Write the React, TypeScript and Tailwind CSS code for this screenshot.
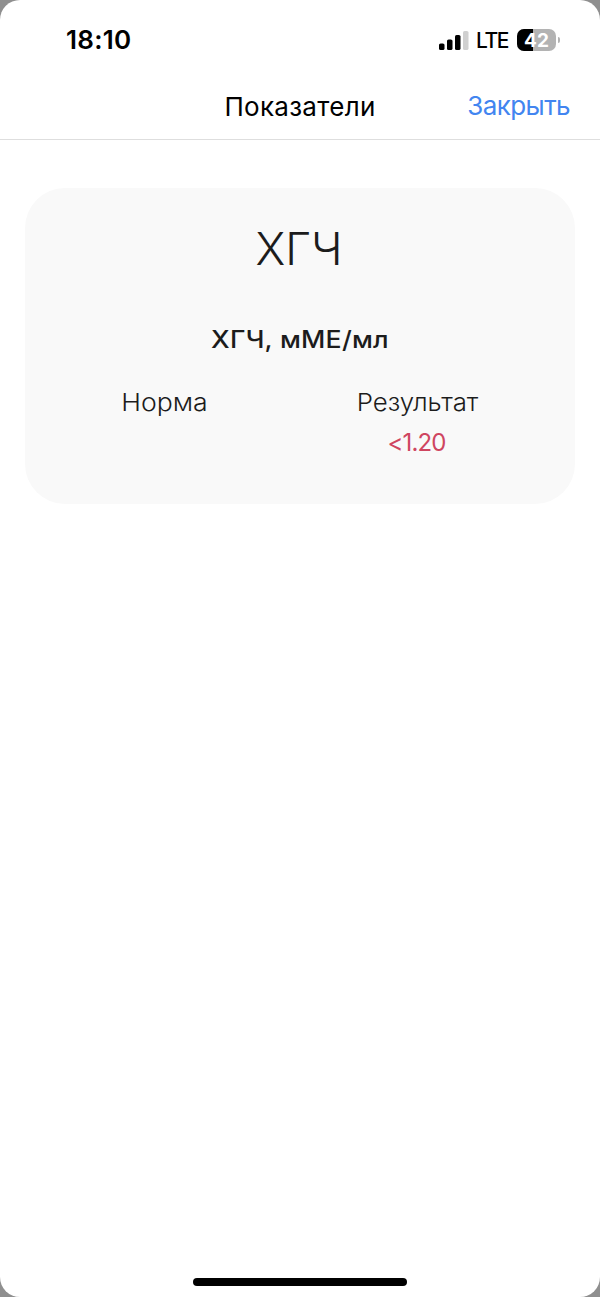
import React from 'react'

function Signal() {
  return (
    <svg width="30" height="19" viewBox="0 0 30 19" className="block">
      <rect x="0" y="12.5" width="5.5" height="6.5" rx="1.6" />
      <rect x="8" y="8.5" width="5.5" height="10.5" rx="1.6" />
      <rect x="16" y="4" width="5.5" height="15" rx="1.6" />
      <rect x="24" y="0" width="5.5" height="19" rx="1.6" fill="#d0d0d0" />
    </svg>
  )
}

function Battery({ level }: { level: number }) {
  return (
    <div className="flex items-center">
      <div className="relative flex h-[22px] w-[39px] items-center justify-center overflow-hidden rounded-[7px] bg-[#b3b3b3]">
        <div
          className="absolute inset-y-0 left-0 bg-black"
          style={{ width: `${level}%` }}
        />
        <span className="relative text-[19px] leading-none font-bold text-white">
          {level}
        </span>
      </div>
      <div className="ml-[2px] h-[6px] w-[2px] rounded-r-full bg-[#b3b3b3]" />
    </div>
  )
}

function StatusBar() {
  return (
    <div className="flex h-20 items-center justify-between pr-[40px] pl-[66px]">
      <span className="text-[26px] leading-8 font-semibold tracking-[0.3px]">
        18:10
      </span>
      <div className="flex items-center">
        <Signal />
        <span className="mr-[9px] ml-[7px] pt-[2px] text-[21px] leading-6 font-medium tracking-[-1.4px]">
          LTE
        </span>
        <Battery level={42} />
      </div>
    </div>
  )
}

function Nav() {
  return (
    <nav className="grid h-[60px] grid-cols-[1fr_auto_1fr] items-start border-b border-[#dedede] px-[30px] pt-[10px] text-[26px] leading-8">
      <span />
      <h1 className="pt-[1px] tracking-[0.3px]">Показатели</h1>
      <button className="justify-self-end leading-8 tracking-[-0.6px] text-[#4285f0]">
        Закрыть
      </button>
    </nav>
  )
}

function Card() {
  return (
    <section className="mx-[25px] mt-12 h-[316px] rounded-[40px] bg-[#f9f9f9] pt-[33px] text-center text-[#1c1c1c]">
      <h2 className="-ml-[2px] text-[45px] leading-[56px] font-light">ХГЧ</h2>
      <h3 className="mt-[47px] scale-x-[1.11] text-[24px] leading-8 font-medium tracking-[0.2px]">
        ХГЧ, мМЕ/мл
      </h3>
      <div className="mt-[27px] grid grid-cols-2 pr-[31px] pl-[13px] text-[24px] leading-10 font-light">
        <div className="scale-x-[1.11]">Норма</div>
        <div>
          <div className="scale-x-[1.075]">Результат</div>
          <div className="pr-[2px] tracking-[-0.9px] font-normal text-[#cf4560]">
            &lt;1.20
          </div>
        </div>
      </div>
    </section>
  )
}

export default function App() {
  return (
    <div className="h-[1297px] w-[600px] bg-[#8f8f8f] font-['Inter',sans-serif] text-black">
      <main className="flex h-full flex-col rounded-[20px] bg-white">
        <StatusBar />
        <Nav />
        <Card />
        <div className="mx-auto mt-auto mb-[11px] h-[8px] w-[214px] rounded-full bg-black" />
      </main>
    </div>
  )
}
